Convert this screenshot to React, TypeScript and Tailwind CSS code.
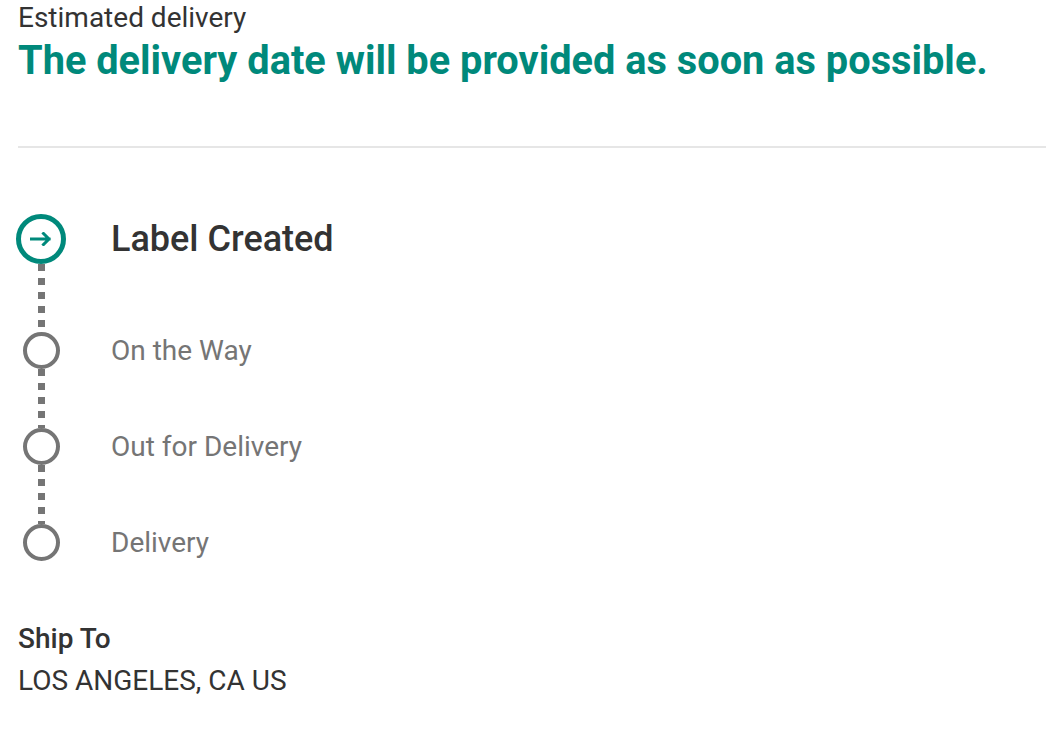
const steps = [
  { label: "On the Way" },
  { label: "Out for Delivery" },
  { label: "Delivery" },
];

const dashed =
  "w-[7px] bg-[repeating-linear-gradient(to_bottom,#757575_0_7px,transparent_7px_14px)]";

const ArrowIcon = () => (
  <svg width="22" height="14" viewBox="0 0 22 14" fill="none">
    <path
      d="M1.5 7H19M13.5 1.5L19 7L13.5 12.5"
      stroke="#00897b"
      strokeWidth="3"
      strokeLinecap="square"
    />
  </svg>
);

const Connector = ({ height }: { height: string }) => (
  <div className="w-[50px] flex justify-center">
    <div className={`${dashed} ${height}`} />
  </div>
);

const App = () => {
  return (
    <main
      className="min-h-screen bg-white pl-[18px] pt-[2px] text-[#333]"
      style={{ fontFamily: "Roboto, 'Liberation Sans', sans-serif" }}
    >
      <section>
        <p className="text-[28px] leading-[32px]">Estimated delivery</p>
        <h1 className="mt-[4px] text-[39.75px] leading-[46px] font-bold text-[#00897b] whitespace-nowrap">
          The delivery date will be provided as soon as possible.
        </h1>
      </section>

      <hr className="mt-[62px] border-0 h-[2px] bg-[#e6e6e6]" />

      <section className="mt-[66px] -ml-[2px] flex flex-col">
        <div className="flex items-center">
          <div className="w-[50px] h-[50px] rounded-full border-[5px] border-[#00897b] flex items-center justify-center">
            <ArrowIcon />
          </div>
          <p className="ml-[45px] text-[36px] leading-[42px] font-medium text-[#333]">
            Label Created
          </p>
        </div>
        <Connector height="h-[68px]" />
        {steps.map((step, i) => (
          <div key={step.label} className="flex flex-col">
            <div className="flex items-center">
              <div className="w-[50px] flex justify-center">
                <div className="w-[37px] h-[37px] rounded-full border-[4px] border-[#757575]" />
              </div>
              <p className="ml-[45px] text-[28px] leading-[32px] text-[#757575]">{step.label}</p>
            </div>
            {i < steps.length - 1 && <Connector height="h-[59px]" />}
          </div>
        ))}
      </section>

      <section className="mt-[62px]">
        <p className="text-[28px] leading-[32px] font-medium text-[#333]">Ship To</p>
        <p className="mt-[10px] text-[28px] leading-[32px] text-[#333]">LOS ANGELES, CA US</p>
      </section>
    </main>
  );
};

export default App;
